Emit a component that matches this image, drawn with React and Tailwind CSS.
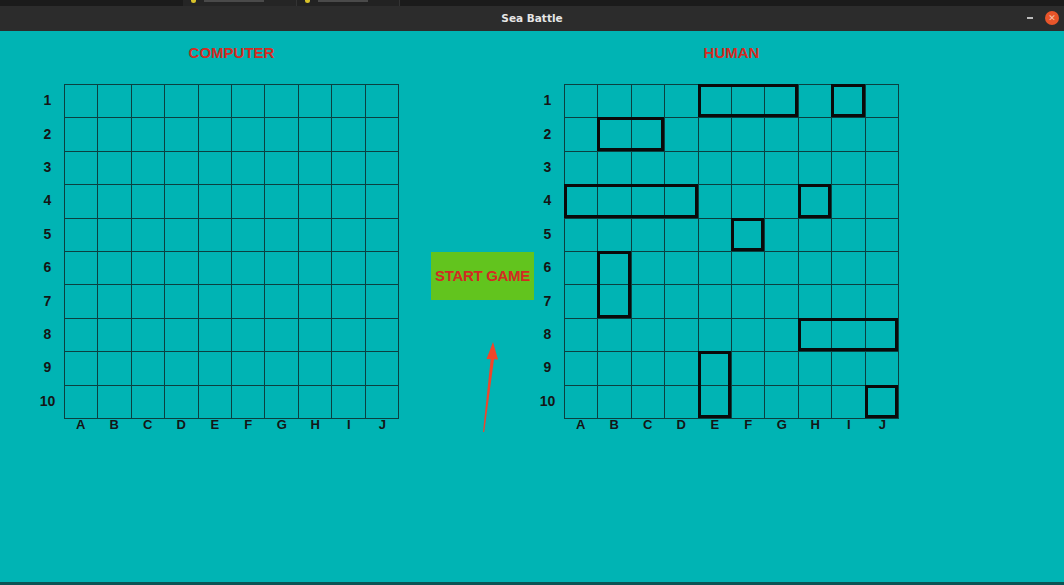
const COLS = ["A", "B", "C", "D", "E", "F", "G", "H", "I", "J"];
const ROWS = [1, 2, 3, 4, 5, 6, 7, 8, 9, 10];

// ships on the human board, placed on the 10x10 grid
const SHIPS = [
  "col-start-5 col-span-3 row-start-1",
  "col-start-9 col-span-1 row-start-1",
  "col-start-2 col-span-2 row-start-2",
  "col-start-1 col-span-4 row-start-4",
  "col-start-8 col-span-1 row-start-4",
  "col-start-6 col-span-1 row-start-5",
  "col-start-2 col-span-1 row-start-6 row-span-2",
  "col-start-8 col-span-3 row-start-8",
  "col-start-5 col-span-1 row-start-9 row-span-2",
  "col-start-10 col-span-1 row-start-10",
];

const Board = ({ title, ships = [] }) => (
  <div className="flex flex-col">
    <div className="mt-[12px] mb-[21px] flex h-[20px] items-center">
      <div className="w-[34px]" />
      <div className="w-[335px] text-center text-[15px] font-bold text-[#d42a22]">
        {title}
      </div>
    </div>
    <div className="flex">
      <div className="flex w-[34px] flex-col pl-[1px]">
        {ROWS.map((r) => (
          <div
            key={r}
            className="flex h-[33.4px] items-center justify-center text-[14px] font-bold text-[#151515]"
          >
            {r}
          </div>
        ))}
      </div>
      <div className="flex flex-col">
        <div className="relative grid h-[335px] w-[335px] grid-cols-10 grid-rows-10 border-t border-l border-[#0b4040]">
          {ROWS.map((r) =>
            COLS.map((c) => (
              <div key={`${r}${c}`} className="border-r border-b border-[#0b4040]" />
            )),
          )}
          <div className="absolute inset-0 grid grid-cols-10 grid-rows-10">
            {ships.map((s) => (
              <div
                key={s}
                className={`${s} -mt-[1px] -ml-[1px] mr-[1px] mb-[1px] border-[3px] border-[#0a0a0a]`}
              />
            ))}
          </div>
        </div>
        <div className="flex h-[12px] w-[335px]">
          {COLS.map((c) => (
            <div
              key={c}
              className="flex flex-1 items-center justify-center text-[13px] font-bold text-[#151515]"
            >
              {c}
            </div>
          ))}
        </div>
      </div>
    </div>
  </div>
);

export default function App() {
  return (
    <div className="flex h-[585px] w-[1064px] flex-col overflow-hidden bg-[#00b4b4] font-['Liberation_Sans',Arial,sans-serif]">
      {/* top strip with editor tabs */}
      <div className="flex h-[6px] bg-[#1b1b1b]">
        <div className="w-[183px]" />
        <div className="flex w-[114px] items-start border-r border-[#333] bg-[#252525] pl-[8px]">
          <div className="mt-[-2px] h-[5px] w-[5px] rounded-full bg-[#d8c22a]" />
          <div className="ml-[8px] h-[2px] w-[60px] bg-[#4a4a4a]" />
        </div>
        <div className="flex w-[103px] items-start border-r border-[#333] bg-[#222] pl-[8px]">
          <div className="mt-[-2px] h-[5px] w-[5px] rounded-full bg-[#d8c22a]" />
          <div className="ml-[8px] h-[2px] w-[50px] bg-[#4a4a4a]" />
        </div>
      </div>

      {/* title bar */}
      <div className="relative flex h-[25px] items-center justify-center bg-[#2c2c2c] font-['DejaVu_Sans',sans-serif] text-[10.5px] font-bold text-[#e6e6e6]">
        Sea Battle
        <div className="absolute right-[5px] top-[5px] flex items-center gap-[12px]">
          <div className="h-[1.5px] w-[6px] bg-[#bdbdbd]" />
          <div className="flex h-[14px] w-[14px] items-center justify-center rounded-full bg-[#e8552a] text-[9px] leading-none text-[#f6c0a8]">
            ✕
          </div>
        </div>
      </div>

      {/* game area */}
      <div className="flex flex-1 pl-[30px]">
        <Board title="COMPUTER" />
        <div className="flex w-[131px] flex-col">
          <div className="ml-[32px] mt-[221px] flex h-[48px] w-[103px] items-center justify-center bg-[#62c41e] text-[15px] font-bold tracking-[-0.3px] text-[#d42a22]">
            START GAME
          </div>
          <svg
            className="ml-[78px] mt-[40px]"
            width="22"
            height="94"
            viewBox="0 0 22 94"
          >
            <polygon points="16,2 9.5,19 21,19.5" fill="#f0452a" />
            <polygon points="13.8,18 17.2,18 7.2,92 6,92" fill="#f0452a" />
          </svg>
        </div>
        <Board title="HUMAN" ships={SHIPS} />
      </div>
      <div className="h-[3px] bg-[#0b5454]" />
    </div>
  );
}
